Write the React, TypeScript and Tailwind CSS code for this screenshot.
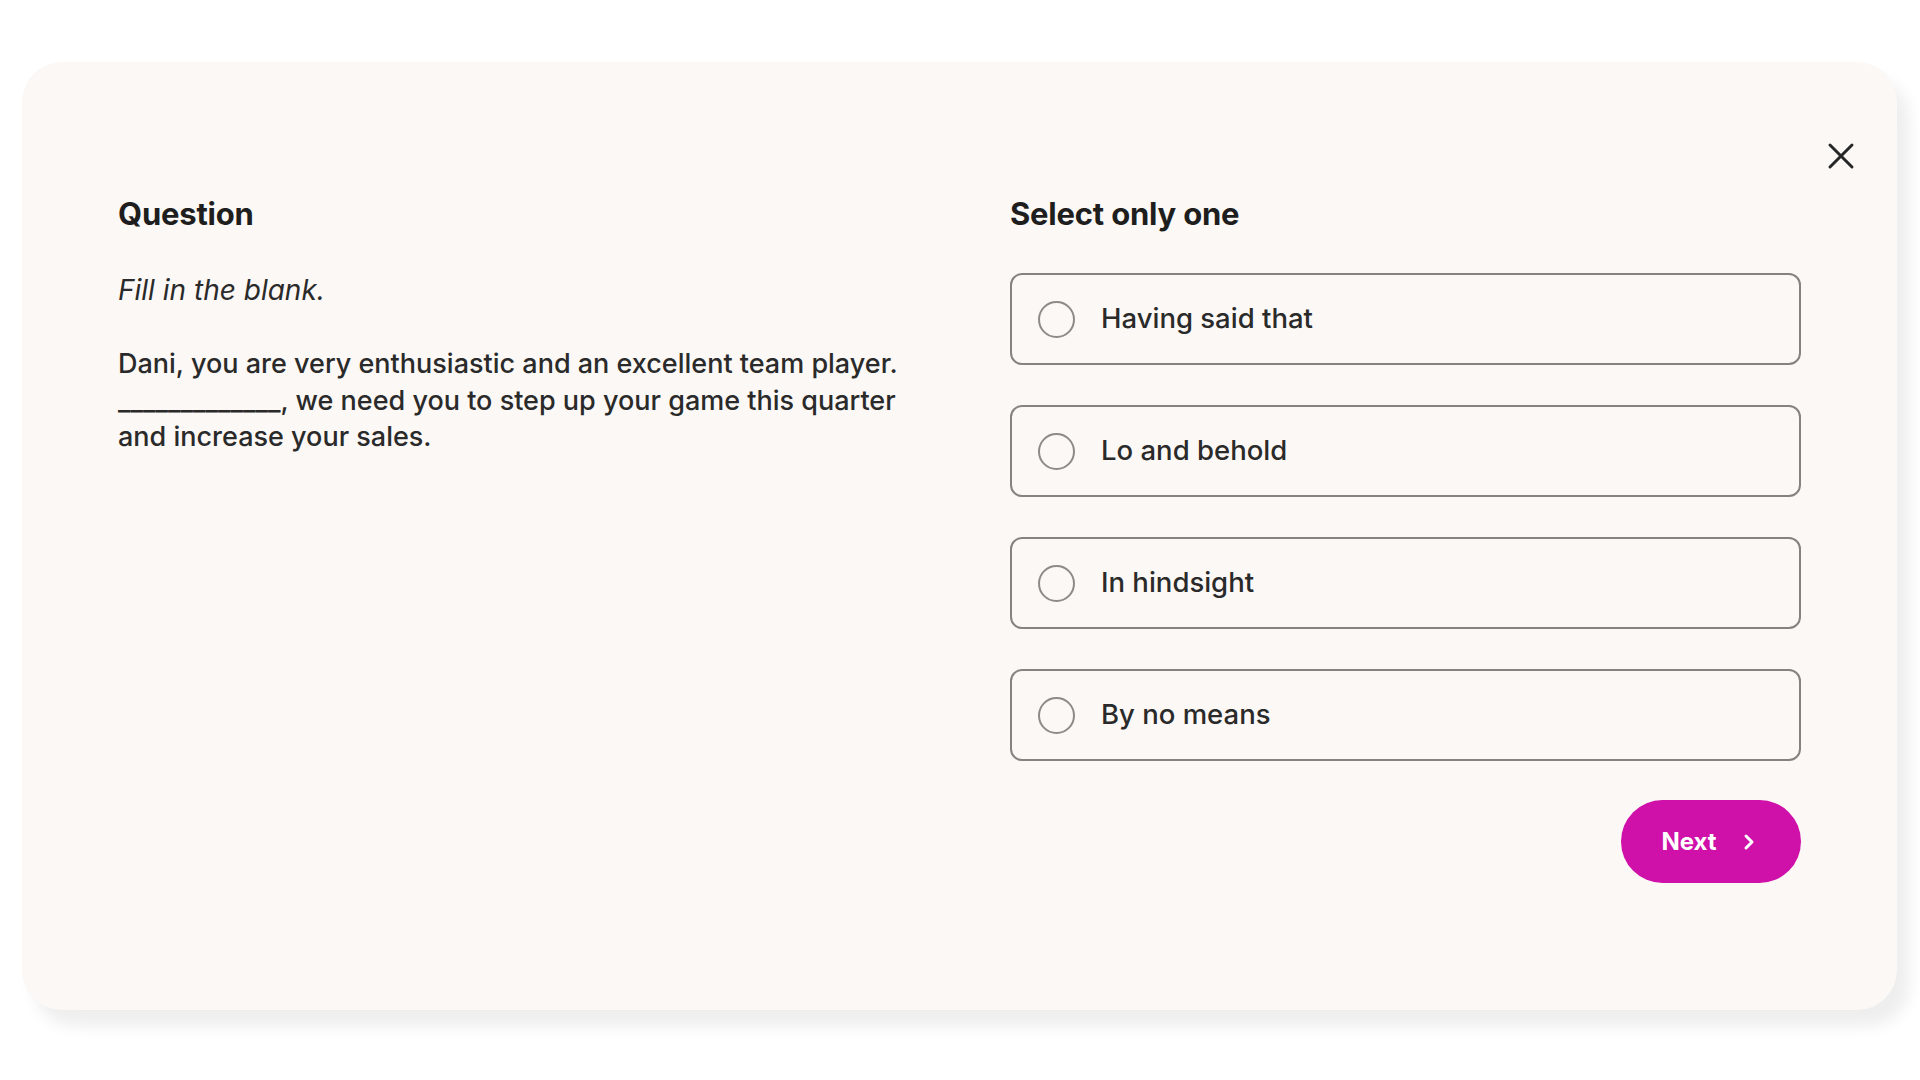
import { X, ChevronRight } from 'lucide-react';

const options = ['Having said that', 'Lo and behold', 'In hindsight', 'By no means'];

export default function App() {
  return (
    <div className="min-h-screen bg-white pt-[62px] pl-[22px] font-['Inter',sans-serif]">
      <div className="relative w-[1875px] h-[948px] rounded-[40px] bg-[#fbf8f5] shadow-[12px_16px_16px_rgba(0,0,0,0.07)] px-[96px] pt-[132px]">
        <button className="absolute top-[68px] right-[30px] p-1 text-[#262626]">
          <X className="w-[44px] h-[44px]" strokeWidth={1.6} />
        </button>

        <div className="grid grid-cols-[800px_1fr] gap-[92px]">
          <div className="text-[#2a2a2a]">
            <h2 className="text-[31px] leading-[40px] font-bold tracking-[-0.2px] text-[#1e1e1e]">Question</h2>
            <p className="mt-[36px] text-[28px] leading-[40px] italic">Fill in the blank.</p>
            <p className="mt-[36px] text-[27px] leading-[36.5px] font-medium">
              Dani, you are very enthusiastic and an excellent team player. _____________, we need you to step up
              your game this quarter and increase your sales.
            </p>
          </div>

          <div>
            <h2 className="text-[31px] leading-[40px] font-bold tracking-[-0.2px] text-[#1e1e1e]">Select only one</h2>
            <div className="mt-[39px] flex flex-col gap-[40px]">
              {options.map((o) => (
                <label
                  key={o}
                  className="flex items-center h-[92px] rounded-[12px] border-2 border-[#86827e] pl-[26px] cursor-pointer"
                >
                  <span className="w-[37px] h-[37px] rounded-full border-2 border-[#8e8a87] shrink-0" />
                  <span className="ml-[26px] text-[27.5px] font-medium text-[#2a2a2a]">{o}</span>
                </label>
              ))}
            </div>
            <div className="mt-[39px] flex justify-end">
              <button className="flex items-center gap-[20px] h-[83px] w-[180px] justify-center rounded-full bg-[#cf10a9] text-white text-[24px] font-bold">
                Next
                <ChevronRight className="w-[24px] h-[24px]" strokeWidth={3} />
              </button>
            </div>
          </div>
        </div>
      </div>
    </div>
  );
}
